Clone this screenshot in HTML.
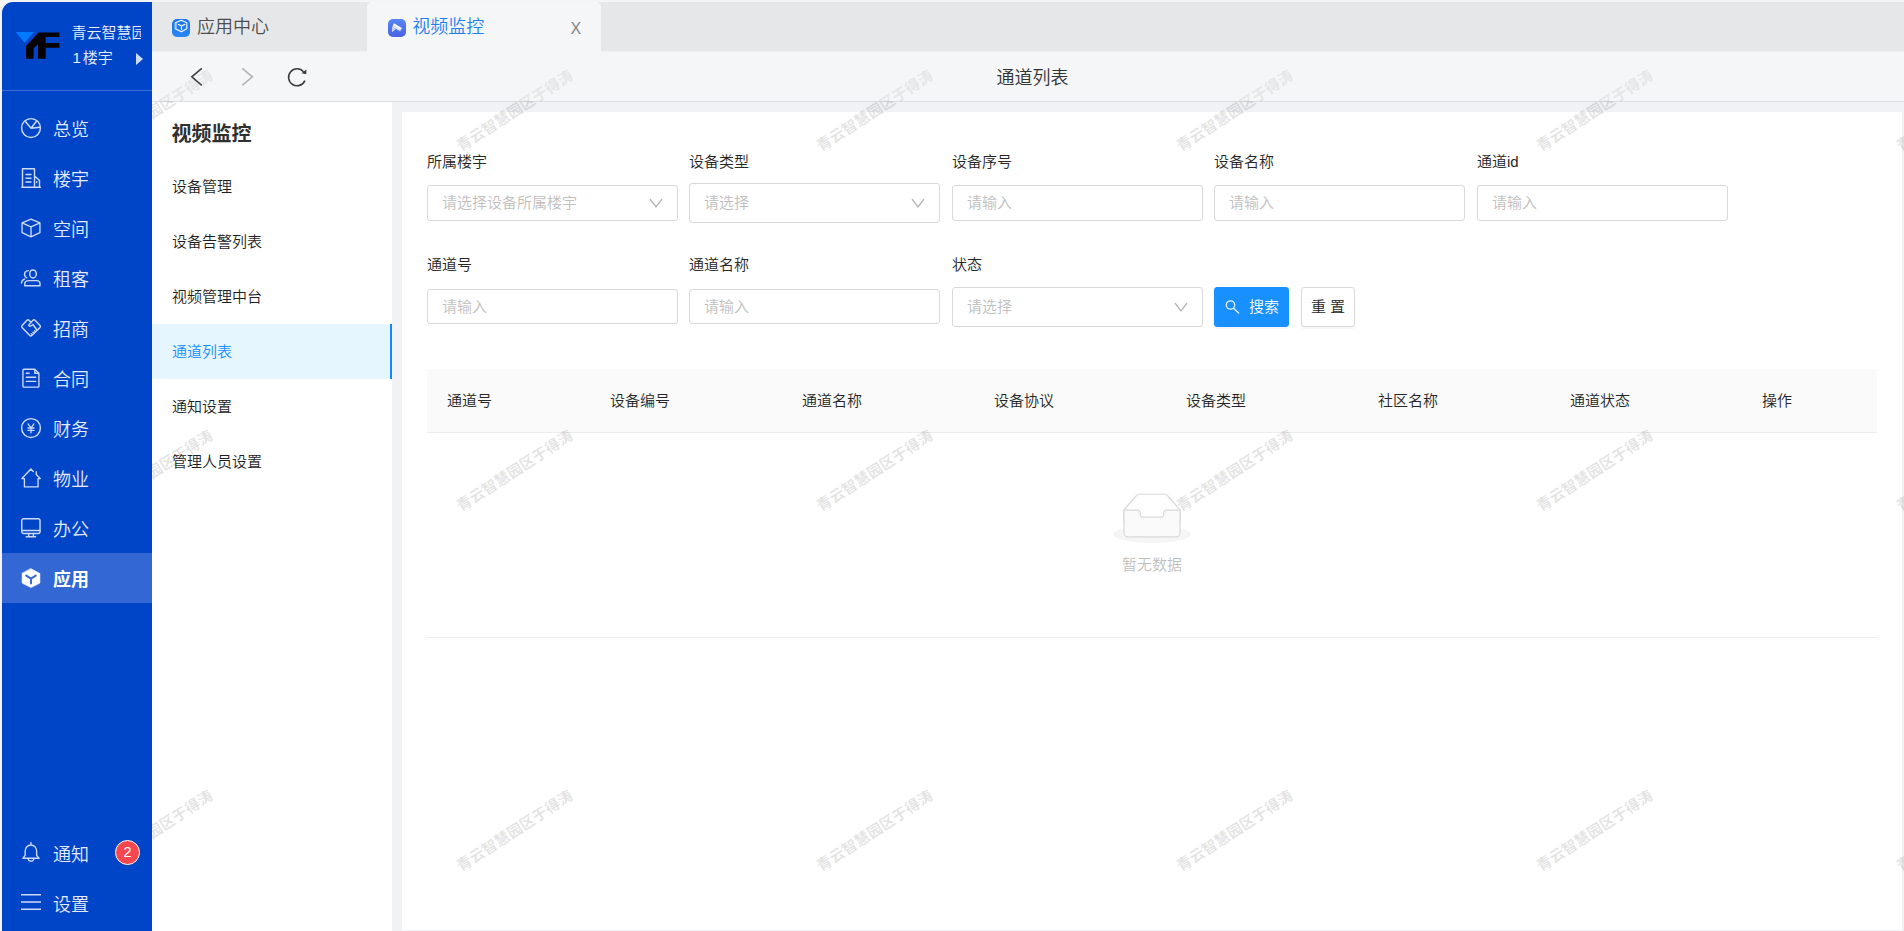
<!DOCTYPE html>
<html lang="zh-CN">
<head>
<meta charset="utf-8">
<title>视频监控 - 通道列表</title>
<style>
*{box-sizing:border-box;margin:0;padding:0}
html,body{width:1904px;height:931px;overflow:hidden}
body{position:relative;background:#f4f4f4;font-family:"Liberation Sans","Noto Sans CJK SC",sans-serif;font-size:15px;font-weight:350;color:#262626}
.abs{position:absolute}
/* ---------- main sidebar ---------- */
#side{position:absolute;left:2px;top:2px;width:150px;height:929px;background:#0045c8;border-top-left-radius:11px;color:#e4ebfa;overflow:hidden}
#side .hd{position:absolute;left:0;top:0;width:150px;height:88px}
#side .sep{position:absolute;left:0;top:88px;width:150px;height:1px;background:#3a6fd6}
#side .org{position:absolute;left:69.5px;top:20px;width:69.5px;height:22px;line-height:22px;font-size:15px;white-space:nowrap;overflow:hidden;color:#e8eefb}
#side .bld{position:absolute;left:70.4px;top:45px;height:22px;line-height:22px;font-size:15px;word-spacing:-2.2px;white-space:nowrap;color:#e8eefb}
#side .tri{position:absolute;left:134px;top:51px;width:0;height:0;border-left:7px solid #cfdcf6;border-top:6px solid transparent;border-bottom:6px solid transparent}
.mi{position:absolute;left:0;width:150px;height:50px;line-height:50px;font-size:18px;color:#e4ebfa;white-space:nowrap}
.mi span.t{position:absolute;left:51px;top:1.5px}
.mi svg{position:absolute;left:18px;top:14px;width:22px;height:22px;fill:none;stroke:#cddaf7;stroke-width:1.45;stroke-linecap:round;stroke-linejoin:round}
.mi.on{background:#3367d3;color:#fff;font-weight:700}
.badge{position:absolute;left:113px;top:12px;width:25px;height:25px;border-radius:12.5px;background:#f5474d;border:1px solid #fff;color:#fff;font-size:14.5px;font-weight:400;line-height:23px;text-align:center}
/* ---------- tab bar ---------- */
#tabs{position:absolute;left:152px;top:2px;width:1752px;height:50px;background:linear-gradient(#e6e7e9,#e6e7e9 49px,#eeeff1 49px)}
#tabs .tab{position:absolute;top:0;height:50px;line-height:49px;font-size:18px;color:#4d4d4d;white-space:nowrap}
#tabs .tab.on{background:#f5f6f8;color:#1e7ff0;border-radius:5px 5px 0 0}
#bar{position:absolute;left:152px;top:52px;width:1752px;height:49px;background:#f5f6f8}
#barline{position:absolute;left:152px;top:101px;width:1752px;height:1px;background:#dcdddf}
#bar .ttl{position:absolute;left:0.5px;width:1760px;top:0px;height:50px;line-height:52px;text-align:center;font-size:18px;color:#333}
/* ---------- sub sidebar ---------- */
#sub{position:absolute;left:152px;top:102px;width:240px;height:829px;background:#fff}
#sub h2{position:absolute;left:19.5px;top:17px;font-size:20px;line-height:30px;font-weight:700;color:#303030}
#sub .it{position:absolute;left:0;width:240px;height:55px;line-height:55px;padding-left:20px;font-size:15px;color:#1f1f1f}
#sub .it.on{background:#e6f6ff;color:#1890ff;border-right:2px solid #1088ff}
/* ---------- content ---------- */
#gap{position:absolute;left:392px;top:102px;width:1512px;height:829px;background:#f0f2f5}
#main{position:absolute;left:402px;top:112px;width:1500px;height:817.6px;background:#fff}
.lb{position:absolute;height:22px;line-height:22px;font-size:15px;color:#262626;white-space:nowrap}
.ip{position:absolute;width:250.5px;border:1px solid #d9d9d9;border-radius:3px;background:#fff;font-size:15px;color:#bfbfbf;padding-left:14px;white-space:nowrap}
.ip svg{position:absolute;right:13px;top:50%;margin-top:-6px;width:16px;height:12px;fill:none;stroke:#b5b5b5;stroke-width:1.3}
.btn{position:absolute;height:40px;line-height:38px;border-radius:3px;font-size:15px;white-space:nowrap}
#thead{position:absolute;left:25px;top:257px;width:1450px;height:64px;background:#fafafa;border-bottom:1px solid #ececec}
#thead span{position:absolute;top:0;height:63px;line-height:63px;font-size:15px;color:#262626;white-space:nowrap}
#tend{position:absolute;left:25px;top:525px;width:1450px;height:1px;background:#ececec}
#empty{position:absolute;left:25px;top:380.6px;width:1450px;text-align:center;color:#bfbfbf;font-size:15px}
/* ---------- watermark ---------- */
#wmk0{position:absolute;left:0;top:0;width:1904px;height:102px;overflow:hidden;pointer-events:none;opacity:.6}
#wmk{position:absolute;left:0;top:102px;width:1904px;height:829px;overflow:hidden;pointer-events:none}
.wm{position:absolute;width:200px;height:24px;line-height:24px;margin-left:-100px;margin-top:-10.5px;text-align:center;font-size:15px;color:rgba(0,0,0,.074);white-space:nowrap;transform:rotate(-33deg);pointer-events:none;font-weight:700;text-shadow:0 0 1px rgba(0,0,0,.05)}
</style>
</head>
<body>

<div id="tabs">
  <div class="tab" style="left:0;width:215px">
    <svg class="abs" style="left:20px;top:17px" width="18" height="18" viewBox="0 0 18 18"><defs><linearGradient id="g1" x1="0" y1="0" x2="0" y2="1"><stop offset="0" stop-color="#1a74f0"/><stop offset="1" stop-color="#2a86f3"/></linearGradient></defs><rect width="18" height="18" rx="5" fill="url(#g1)"/><path d="M9.3 1.3L14.8 3.8V9.8L9.3 12.8L3.3 9.8V3.8Z" fill="none" stroke="#fff" stroke-width="1.1" stroke-linejoin="round"/><path d="M3.9 4V9.6" stroke="#a9cdfb" stroke-width="1.6"/><path d="M6.4 5.4L9.5 6.8L12.8 5.4M9.5 6.8V10.6" fill="none" stroke="#fff" stroke-width="1.1" stroke-linecap="round"/></svg>
    <span class="abs" style="left:45px;top:1.3px">应用中心</span>
  </div>
  <div class="tab on" style="left:215px;width:234px">
    <svg class="abs" style="left:21px;top:17px" width="18" height="18" viewBox="0 0 18 18"><defs><linearGradient id="g2" x1="0" y1="0" x2="0" y2="1"><stop offset="0" stop-color="#5686f6"/><stop offset="1" stop-color="#4a62e2"/></linearGradient></defs><rect width="18" height="18" rx="5" fill="url(#g2)"/><path d="M4.2 7.6L3.9 13.2L7.6 10.2Z" fill="#fff" fill-opacity=".72"/><path d="M5 6.2L13 10.6L12.2 12.2L4.4 7.9Z" fill="#fff" fill-opacity=".82"/><path d="M5.9 4.3L13.9 8.9L13 10.7L5 6.3Z" fill="#fff"/></svg>
    <span class="abs" style="left:45.3px;top:1.3px">视频监控</span>
    <span class="abs" style="left:203.5px;top:1.5px;font-size:16px;font-weight:400;color:#858585">X</span>
  </div>
</div>
<div id="bar">
  <svg class="abs" style="left:28px;top:6px" width="140" height="36" viewBox="180 58 140 36" fill="none" stroke-width="1.6">
    <path d="M201.8 68.3L191.8 76.8L201.8 85.3" stroke="#444"/>
    <path d="M242.2 68.3L252.4 76.8L242.2 85.3" stroke="#b4b4b4"/>
    <path d="M304.9 80.6A8.5 8.5 0 1 1 303.6 71.8" stroke="#3c3c3c"/>
    <path d="M306.4 69.4L306.3 74.3L301.5 73.2Z" fill="#3c3c3c" stroke="none"/>
  </svg>
  <div class="ttl">通道列表</div>
</div>
<div id="barline"></div>

<div id="gap"></div>
<div id="sub">
  <h2>视频监控</h2>
  <div class="it" style="top:57px">设备管理</div>
  <div class="it" style="top:112px">设备告警列表</div>
  <div class="it" style="top:167px">视频管理中台</div>
  <div class="it on" style="top:222px">通道列表</div>
  <div class="it" style="top:277px">通知设置</div>
  <div class="it" style="top:332px">管理人员设置</div>
</div>

<div id="main">
  <div class="lb" style="left:25px;top:39px">所属楼宇</div>
  <div class="lb" style="left:287px;top:39px">设备类型</div>
  <div class="lb" style="left:550px;top:39px">设备序号</div>
  <div class="lb" style="left:812px;top:39px">设备名称</div>
  <div class="lb" style="left:1075px;top:39px">通道id</div>
  <div class="ip" style="left:25px;top:73px;height:36px;line-height:34px">请选择设备所属楼宇<svg viewBox="0 0 16 12"><path d="M2 2L8 10L14 2"/></svg></div>
  <div class="ip" style="left:287px;top:71px;height:40px;line-height:38px">请选择<svg viewBox="0 0 16 12"><path d="M2 2L8 10L14 2"/></svg></div>
  <div class="ip" style="left:550px;top:73px;height:36px;line-height:34px">请输入</div>
  <div class="ip" style="left:812px;top:73px;height:36px;line-height:34px">请输入</div>
  <div class="ip" style="left:1075px;top:73px;height:36px;line-height:34px">请输入</div>

  <div class="lb" style="left:25px;top:142px">通道号</div>
  <div class="lb" style="left:287px;top:142px">通道名称</div>
  <div class="lb" style="left:550px;top:142px">状态</div>
  <div class="ip" style="left:25px;top:177px;height:35px;line-height:33px">请输入</div>
  <div class="ip" style="left:287px;top:177px;height:35px;line-height:33px">请输入</div>
  <div class="ip" style="left:550px;top:175px;height:40px;line-height:38px">请选择<svg viewBox="0 0 16 12"><path d="M2 2L8 10L14 2"/></svg></div>
  <div class="btn" style="left:812px;top:175px;width:75px;box-shadow:0 2px 0 rgba(0,0,0,.04);background:#1890ff;color:#fff;border:1px solid #1890ff">
    <svg class="abs" style="left:9px;top:10px" width="18" height="18" viewBox="0 0 18 18" fill="none" stroke="#e3f1ff" stroke-width="1.3"><circle cx="6.5" cy="7" r="4.2"/><path d="M9.6 10.2L14.6 15" stroke-linecap="round"/></svg>
    <span class="abs" style="left:34px;top:0">搜索</span>
  </div>
  <div class="btn" style="left:899px;top:175px;width:54px;box-shadow:0 2px 0 rgba(0,0,0,.03);background:#fff;color:#262626;border:1px solid #d9d9d9;text-align:center">重 置</div>

  <div id="thead">
    <span style="left:20px">通道号</span>
    <span style="left:183px">设备编号</span>
    <span style="left:375px">通道名称</span>
    <span style="left:567px">设备协议</span>
    <span style="left:759px">设备类型</span>
    <span style="left:951px">社区名称</span>
    <span style="left:1143px">通道状态</span>
    <span style="left:1335px">操作</span>
  </div>
  <div id="empty">
    <svg width="78" height="50" viewBox="0 0 64 41" style="display:block;margin:0 auto"><g transform="translate(0 1)" fill="none" fill-rule="evenodd"><ellipse fill="#f5f5f5" cx="32" cy="33" rx="32" ry="7"/><g fill-rule="nonzero" stroke="#d9d9d9"><path d="M55 12.76L44.854 1.258C44.367.474 43.656 0 42.907 0H21.093c-.749 0-1.46.474-1.947 1.257L9 12.761V22h46v-9.24z"/><path d="M41.613 15.931c0-1.605.994-2.93 2.227-2.931H55v18.137C55 33.26 53.68 35 52.05 35h-40.1C10.32 35 9 33.259 9 31.137V13h11.16c1.233 0 2.227 1.323 2.227 2.928v.022c0 1.605 1.005 2.901 2.237 2.901h14.752c1.232 0 2.237-1.308 2.237-2.913v-.007z" fill="#fafafa"/></g></g></svg>
    <div style="margin-top:11.4px;height:22px;line-height:22px">暂无数据</div>
  </div>
  <div id="tend"></div>
</div>

<div id="wmk0">
  <div class="wm" style="left:155px;top:109px">青云智慧园区于得涛</div>
  <div class="wm" style="left:515px;top:109px">青云智慧园区于得涛</div>
  <div class="wm" style="left:875px;top:109px">青云智慧园区于得涛</div>
  <div class="wm" style="left:1235px;top:109px">青云智慧园区于得涛</div>
  <div class="wm" style="left:1595px;top:109px">青云智慧园区于得涛</div>
  <div class="wm" style="left:1955px;top:109px">青云智慧园区于得涛</div>
</div>
<div id="wmk">
  <div class="wm" style="left:155px;top:7px">青云智慧园区于得涛</div>
  <div class="wm" style="left:515px;top:7px">青云智慧园区于得涛</div>
  <div class="wm" style="left:875px;top:7px">青云智慧园区于得涛</div>
  <div class="wm" style="left:1235px;top:7px">青云智慧园区于得涛</div>
  <div class="wm" style="left:1595px;top:7px">青云智慧园区于得涛</div>
  <div class="wm" style="left:1955px;top:7px">青云智慧园区于得涛</div>
  <div class="wm" style="left:155px;top:367px">青云智慧园区于得涛</div>
  <div class="wm" style="left:515px;top:367px">青云智慧园区于得涛</div>
  <div class="wm" style="left:875px;top:367px">青云智慧园区于得涛</div>
  <div class="wm" style="left:1235px;top:367px">青云智慧园区于得涛</div>
  <div class="wm" style="left:1595px;top:367px">青云智慧园区于得涛</div>
  <div class="wm" style="left:1955px;top:367px">青云智慧园区于得涛</div>
  <div class="wm" style="left:155px;top:727px">青云智慧园区于得涛</div>
  <div class="wm" style="left:515px;top:727px">青云智慧园区于得涛</div>
  <div class="wm" style="left:875px;top:727px">青云智慧园区于得涛</div>
  <div class="wm" style="left:1235px;top:727px">青云智慧园区于得涛</div>
  <div class="wm" style="left:1595px;top:727px">青云智慧园区于得涛</div>
  <div class="wm" style="left:1955px;top:727px">青云智慧园区于得涛</div>
</div>

<div id="side">
  <svg class="abs" style="left:0;top:0" width="150" height="88" viewBox="2 2 150 88">
    <polygon points="15.8,31.9 33.9,31.9 24.6,42.7" fill="#007aff"/>
    <polygon points="38.7,32.4 59.4,32.4 59.4,37.1 45.7,37.1 45.7,43.1 59.4,43.1 59.4,47.7 45.7,47.7 45.7,58.7 37.9,58.7 37.9,44.2 33.6,48.2 33.6,58.7 26.1,58.7 26.1,46" fill="#060203"/>
  </svg>
  <div class="org">青云智慧园区</div>
  <div class="bld">1 楼宇</div>
  <div class="tri"></div>
  <div class="sep"></div>

  <div class="mi" style="top:101px"><svg viewBox="0 0 22 22"><circle cx="11" cy="11" r="9.4"/><path d="M5.6 4.8L11.1 11.3L16.4 4.2M11.1 11.3L20 10.2"/></svg><span class="t">总览</span></div>
  <div class="mi" style="top:151px"><svg viewBox="0 0 22 22"><path d="M1.8 20.2H20.4M2.5 20.2V1.7H14.5V20.2M14.5 9L19.5 13.5V20.2M6 7.5H11M6 11.3H11M6 15H11M16.7 14.6V15.6"/></svg><span class="t">楼宇</span></div>
  <div class="mi" style="top:201px"><svg viewBox="0 0 22 22"><g transform="translate(11 11) scale(.94) translate(-11 -11)"><path d="M11 1.5L20.5 5.6V16L11 20.4L1.5 16V5.6ZM1.5 5.6L11 9.8L20.5 5.6M11 9.8V20.4"/></g></svg><span class="t">空间</span></div>
  <div class="mi" style="top:251px"><svg viewBox="0 0 22 22"><ellipse cx="13" cy="6.9" rx="3.3" ry="4"/><path d="M4.8 18.7V16.4C4.8 14.6 6.6 13.6 9 13.6H16.6C19 13.6 20 14.6 20 16.4V18.7ZM8.4 3.6C5.6 3.6 4.3 6 4.6 7.8C4.8 9.2 5.6 10.3 6.8 10.8M1.5 16C1.7 14 2.8 12.6 4.6 12.1"/></svg><span class="t">租客</span></div>
  <div class="mi" style="top:301px"><svg viewBox="0 0 22 22"><g transform="translate(11 10.7) scale(.98) translate(-11 -11)"><path d="M10.8 5.3L8.9 3.3A1.4 1.4 0 0 0 6.9 3.3L1.9 8.8A1.4 1.4 0 0 0 1.9 10.8L9.8 19A1.4 1.4 0 0 0 11.8 19L20.2 10.8A1.4 1.4 0 0 0 20.2 8.8L15.1 3.3A1.4 1.4 0 0 0 13.1 3.3L8.6 8.4Q9.6 10.2 11.2 9L12.9 7.7L17.3 13.6M12.3 18.2L11.3 17.2M14 16.6L13 15.6M15.7 15L14.7 14" /></g></svg><span class="t">招商</span></div>
  <div class="mi" style="top:351px"><svg viewBox="0 0 22 22"><g transform="translate(11 11) scale(.94) translate(-11 -11)"><path d="M3.4 1.7H15L19.4 6V19.7A1 1 0 0 1 18.4 20.7H3.4A1 1 0 0 1 2.4 19.7V2.7A1 1 0 0 1 3.4 1.7ZM15 1.7V6H19.4M6 6H9M6 10.2H16M6 14.6H16"/></g></svg><span class="t">合同</span></div>
  <div class="mi" style="top:401px"><svg viewBox="0 0 22 22"><circle cx="11" cy="11" r="9.4"/><path d="M8 6.9L11 10.9L14 6.9M11 10.9V15.8M8 11H14M8 13.4H14" stroke-width="1.3"/></svg><span class="t">财务</span></div>
  <div class="mi" style="top:451px"><svg viewBox="0 0 22 22"><g transform="translate(11 11) scale(.94) translate(-11 -11)"><path d="M13.4 4.1L10.9 1.5L1.3 11.6H4V20.5H18.5V11.6H20.8L16.6 7.3V4.4"/></g></svg><span class="t">物业</span></div>
  <div class="mi" style="top:501px"><svg viewBox="0 0 22 22"><rect x="1.75" y="1.7" width="18.25" height="14.8" rx="2"/><path d="M1.75 13.4H20M8.7 16.5V19.8M13.4 16.5V19.8M6.2 19.8H15.6"/></svg><span class="t">办公</span></div>
  <div class="mi on" style="top:551px"><svg viewBox="0 0 22 22"><path d="M11 1.7L19.9 6.5V16.1L11 20.6L2.1 16.1V6.5Z" fill="#fff" stroke="#fff" stroke-width=".6"/><path d="M6.2 8.6L11 11.6L15.8 8.6M11 11.6V16.6" stroke="#3367d3" stroke-width="1.9"/></svg><span class="t">应用</span></div>

  <div class="mi" style="top:826px"><svg viewBox="0 0 22 22"><g transform="translate(11 11) scale(.94 1) translate(-11 -11)"><path d="M10.9 0.6V2.6M4.8 13.4V9A6.1 6.1 0 0 1 17 9V13.4L19.6 16.2H2.4ZM8 16.6A3 2.6 0 0 0 14 16.6"/></g></svg><span class="t">通知</span><div class="badge">2</div></div>
  <div class="mi" style="top:876px"><svg viewBox="0 0 22 22" style="stroke-linecap:butt"><path d="M1 2.8H21M1 10H21M1 17.2H21"/></svg><span class="t">设置</span></div>
</div>

</body>
</html>
